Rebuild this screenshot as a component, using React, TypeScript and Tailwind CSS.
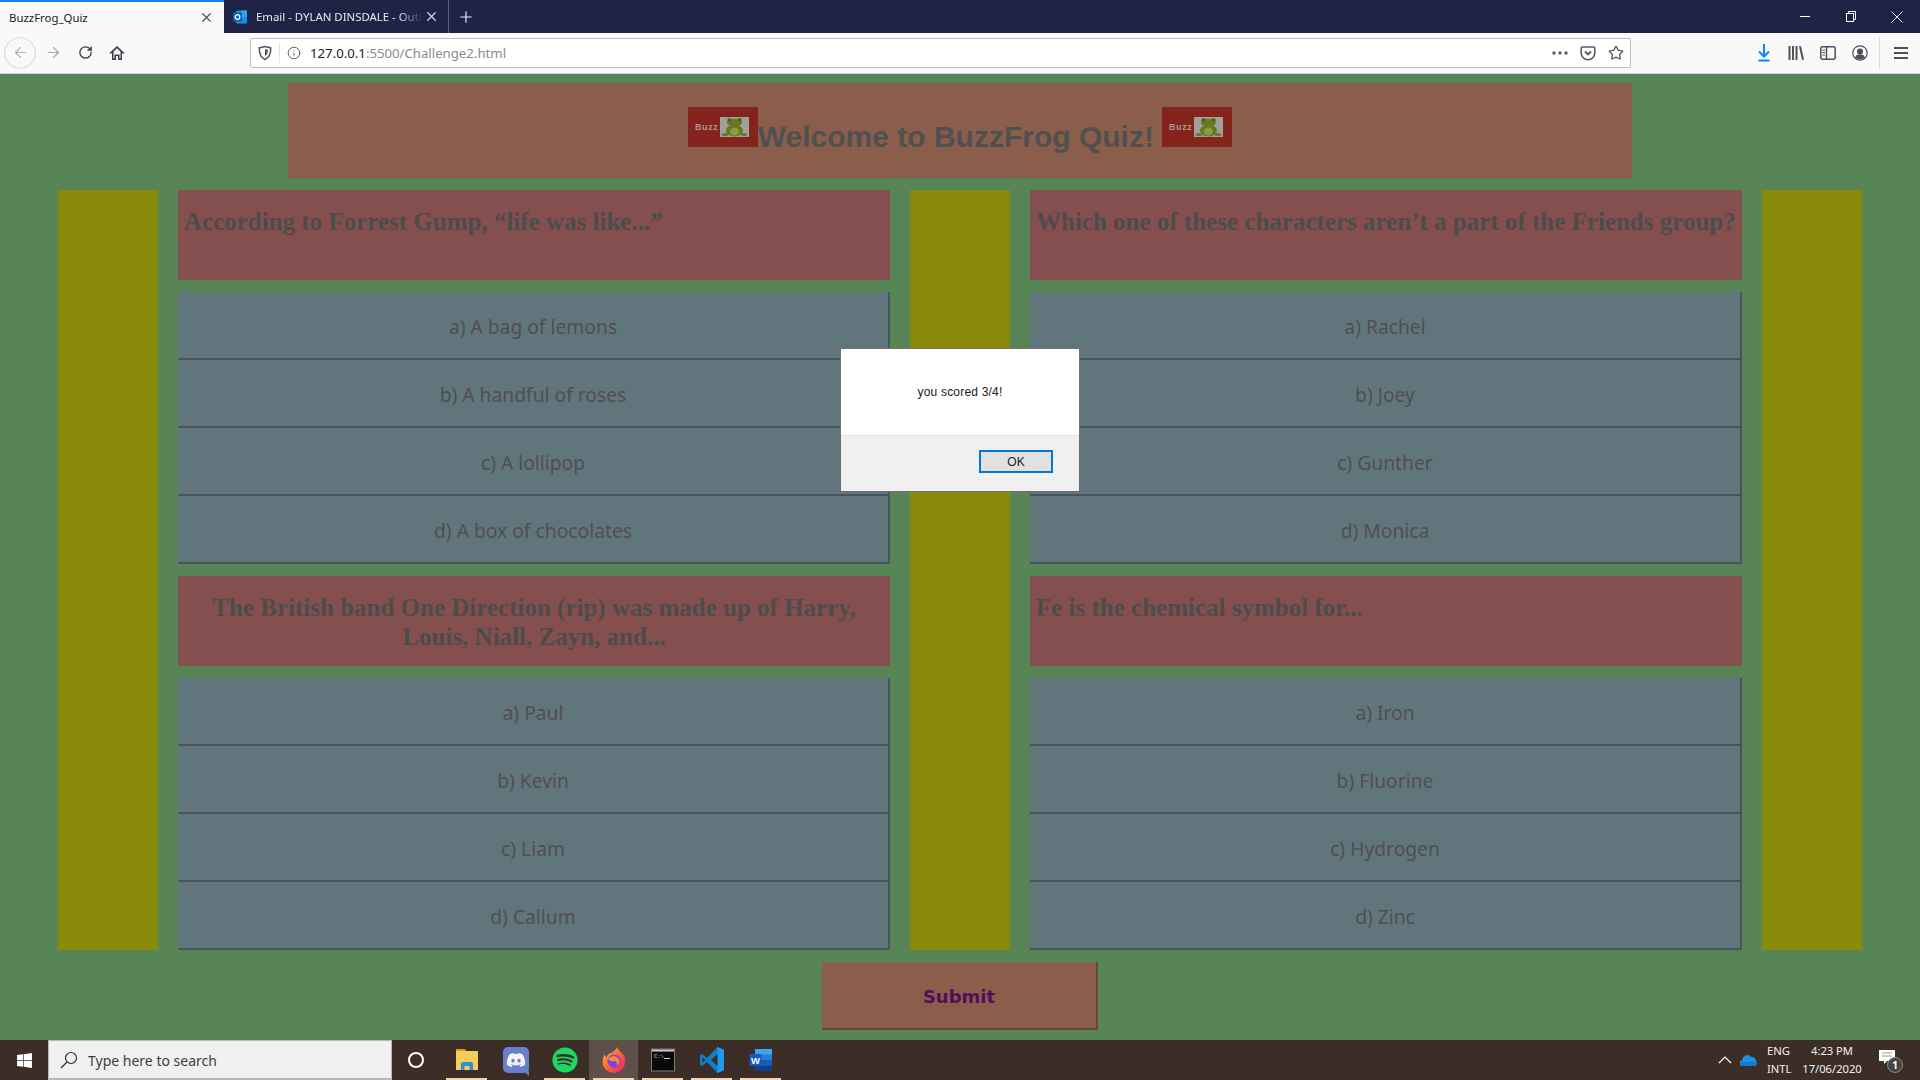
import React from "react";
import { ArrowLeft, ArrowRight, RotateCw, Info, Star, X, Plus } from "lucide-react";
import { FaDiscord, FaSpotify, FaWindows } from "react-icons/fa";

const Logo = () => (
  <svg width="70" height="40" viewBox="0 0 70 40" className="inline align-baseline">
    <rect width="70" height="40" fill="#85241d" />
    <text x="7" y="23" fontFamily="Liberation Sans, sans-serif" fontSize="9" fontWeight="700" letterSpacing="0.6" fill="#ad9591">Buzz</text>
    <rect x="32" y="10" width="29" height="20" fill="#a09f9c" />
    <ellipse cx="46.5" cy="23.5" rx="8.5" ry="6" fill="#67791f" />
    <ellipse cx="46.5" cy="24.5" rx="4.5" ry="4" fill="#8b9a4a" />
    <ellipse cx="46.5" cy="15.5" rx="7.5" ry="3.8" fill="#67791f" />
    <circle cx="41.5" cy="13.2" r="2.3" fill="#67791f" />
    <circle cx="51.5" cy="13.2" r="2.3" fill="#67791f" />
    <circle cx="41.5" cy="13" r="1.1" fill="#3b3b4a" />
    <circle cx="51.5" cy="13" r="1.1" fill="#3b3b4a" />
    <ellipse cx="37" cy="27.5" rx="3.2" ry="1.5" fill="#67791f" />
    <ellipse cx="56" cy="27.5" rx="3.2" ry="1.5" fill="#67791f" />
  </svg>
);

const Answer = ({ text }: { text: string }) => (
  <div className="h-[68px] shrink-0 bg-[#60767c] border-b-2 border-r-2 border-[#47565b] flex items-center justify-center text-[19.25px] text-[#504f4f] font-['Noto_Sans',sans-serif] pt-[4px]">
    {text}
  </div>
);

const Quiz = ({ q, answers, center }: { q: string; answers: string[]; center?: boolean }) => (
  <div className="flex flex-col">
    <div className={`h-[90px] bg-[#854f4f] px-[6px] pt-[17px] text-[25px] leading-[29px] font-bold text-[#4d4c4c] font-['Liberation_Serif',serif] ${center ? "text-center" : "text-left"}`}>
      {q}
    </div>
    <div className="mt-3 flex flex-col">
      {answers.map((a) => (
        <Answer key={a} text={a} />
      ))}
    </div>
  </div>
);

const Side = () => <div className="bg-[#8b8b0b]" />;

const Cell = ({ children }: { children: React.ReactNode }) => (
  <div className="w-8 h-8 flex items-center justify-center shrink-0">{children}</div>
);

const Pocket = () => (
  <svg width="16" height="16" viewBox="0 0 16 16" fill="none" stroke="#5b5b66" strokeWidth="1.6">
    <path d="M2 2h12a.8.8 0 0 1 .8.8V8a6.8 6.8 0 0 1-13.6 0V2.8A.8.8 0 0 1 2 2z" />
    <path d="M5 6.5l3 3 3-3" strokeWidth="1.8" />
  </svg>
);

const ShieldIcon = () => (
  <svg width="16" height="16" viewBox="0 0 16 16" fill="none" stroke="#55555f" strokeWidth="1.6">
    <path d="M8 1.5l5.7 1.4c.2 5.6-1.4 9.6-5.7 11.6-4.3-2-5.9-6-5.7-11.6z" />
    <path d="M8 4l3 .7c0 3-.8 5-3 6.4z" fill="#55555f" stroke="none" />
  </svg>
);

const HomeIcon = () => (
  <svg width="16" height="16" viewBox="0 0 16 16" fill="#3b3b45">
    <path d="M8 1L.5 8l1 1.1L3 7.8V15h4v-4h2v4h4V7.8l1.5 1.3 1-1.1zM11.5 13.5h-1v-4h-5v4h-1V6.5L8 3.2l3.5 3.3z" />
  </svg>
);

const Library = () => (
  <svg width="16" height="16" viewBox="0 0 16 16" fill="#4f4f58">
    <rect x="0.5" y="1" width="2" height="14" />
    <rect x="4" y="1" width="2" height="14" />
    <rect x="7.5" y="1" width="2" height="14" />
    <path d="M11 1.4l1.9-.5 3.1 13.6-1.9.5z" />
  </svg>
);

const Sidebar = () => (
  <svg width="16" height="16" viewBox="0 0 16 16" fill="none" stroke="#4f4f58" strokeWidth="1.5">
    <rect x="0.8" y="1.8" width="14.4" height="12.4" rx="2" />
    <path d="M6.5 2v12" />
    <path d="M2.5 5h2.5M2.5 7.5h2.5M2.5 10h2.5" strokeWidth="1.1" />
  </svg>
);

const Account = () => (
  <svg width="16" height="16" viewBox="0 0 16 16" fill="none" stroke="#4f4f58">
    <circle cx="8" cy="8" r="7.2" strokeWidth="1.2" />
    <circle cx="8" cy="6.4" r="3" fill="#4f4f58" stroke="none" />
    <path d="M3 12.5c1-2.6 3-3.2 5-3.2s4 .6 5 3.2A6.6 6.6 0 0 1 8 14.6a6.6 6.6 0 0 1-5-2.1z" fill="#4f4f58" stroke="none" />
  </svg>
);

const Outlook = () => (
  <svg width="16" height="16" viewBox="0 0 16 16">
    <rect x="4" y="1.5" width="11" height="13" rx="1" fill="#1490df" />
    <rect x="9" y="1.5" width="6" height="6.5" fill="#28a8ea" />
    <rect x="1" y="3.5" width="9" height="9" rx="1" fill="#0f62ab" />
    <circle cx="5.5" cy="8" r="2.3" fill="none" stroke="#fff" strokeWidth="1.3" />
  </svg>
);

const Folder = () => (
  <svg width="24" height="26" viewBox="0 0 24 26">
    <path d="M1 2h9l2 3H1z" fill="#d59c1e" />
    <rect x="1" y="4" width="22" height="19" fill="#f5cd5a" />
    <path d="M6 23v-6a2 2 0 0 1 2-2h8a2 2 0 0 1 2 2v6h-3.5v-4h-5v4z" fill="#2f8fd6" />
  </svg>
);

const Firefox = () => (
  <svg width="24" height="28" viewBox="0 0 24 28">
    <defs>
      <linearGradient id="ff" x1="0" y1="0" x2="1" y2="1">
        <stop offset="0" stopColor="#ffbd2e" />
        <stop offset="0.55" stopColor="#ff5a36" />
        <stop offset="1" stopColor="#e31587" />
      </linearGradient>
    </defs>
    <path d="M15 1c1 3 3 4 5 6 3 3 4 7 3 11-1 5-6 9-11 9S1 23 .7 17C.5 13 1.500 10 3 8c0 2 .5 3 1.500 3.500C5 9 7 7.500 9 7c2-1 5-3 6-6z" fill="url(#ff)" />
    <circle cx="12" cy="15" r="6.500" fill="#7543e3" />
    <path d="M6 13c2-3 7-4 10-1 2 2 2 6-1 8 1-3-1-5-3-5-2 .5-4 0-6-2z" fill="#ff8a2b" />
  </svg>
);

const Terminal = () => (
  <svg width="24" height="24" viewBox="0 0 24 24">
    <rect x="0.500" y="1" width="23" height="22" fill="#0a0a0a" stroke="#7d7d7d" />
    <rect x="1" y="1.500" width="22" height="2" fill="#cfcfcf" />
    <text x="3" y="10" fontSize="5.500" fill="#d8d8d8" fontFamily="Liberation Mono, monospace">C:\</text>
    <rect x="13" y="10" width="6" height="1" fill="#d8d8d8" />
  </svg>
);

const VSCode = () => (
  <svg width="26" height="28" viewBox="0 0 26 28">
    <path d="M18.500 1L8 12 3 8 1 9.500v9L3 20l5-4 10.500 11 6.500-3V4z" fill="#0f7fcc" />
    <path d="M18.500 1L25 4v20l-6.500 3z" fill="#1f9cf0" />
    <path d="M18.500 8l-6.500 6 6.500 6z" fill="#3c2e27" />
    <path d="M3.500 11.500L6.500 14l-3 2.500z" fill="#3c2e27" />
  </svg>
);

const Word = () => (
  <svg width="24" height="24" viewBox="0 0 24 24">
    <rect x="6" y="1" width="17" height="22" rx="1" fill="#2b7cd3" />
    <rect x="6" y="1" width="17" height="5.500" fill="#41a5ee" />
    <rect x="6" y="12" width="17" height="5.500" fill="#185abd" />
    <rect x="6" y="17.500" width="17" height="5.500" fill="#103f91" />
    <rect x="0.500" y="6" width="12" height="12" rx="1" fill="#185abd" />
    <text x="6.500" y="15.500" textAnchor="middle" fontSize="9.500" fontWeight="700" fill="#fff" fontFamily="Liberation Sans, sans-serif">W</text>
  </svg>
);

const Discord = () => (
  <div className="relative w-[26px] h-[26px] rounded-[5px] bg-[#6a7fc9] flex items-center justify-center">
    <FaDiscord size={20} className="text-[#f2f3f8]" />
    <div className="absolute right-0 -bottom-[3px] w-0 h-0 border-t-[5px] border-l-[5px] border-t-[#6a7fc9] border-l-transparent" />
  </div>
);

const TaskIcon = ({ children, on, active }: { children: React.ReactNode; on?: boolean; active?: boolean }) => (
  <div className={`relative w-[49px] h-10 shrink-0 flex items-center justify-center ${active ? "bg-[#5d5048]" : ""}`}>
    {children}
    {on && <div className="absolute bottom-0 left-[4px] right-[4px] h-[2px] bg-[#f5d5b8]" />}
  </div>
);

export default function App() {
  return (
    <div className="relative w-[1920px] h-[1080px] overflow-hidden flex flex-col font-['Noto_Sans',sans-serif]">
      {/* tab strip */}
      <div className="h-[33px] shrink-0 bg-[#1f2447] flex items-stretch text-[11.4px]">
        <div className="w-[224px] bg-[#f9f9fa] border-t-[2px] border-[#0a84ff] flex items-center pl-[9px] pr-[10px] text-[#1c1b22]">
          <span className="flex-1">BuzzFrog_Quiz</span>
          <X size={15} strokeWidth={1.7} className="text-[#4a4a52]" />
        </div>
        <div className="w-[225px] border-r border-[#5a5f7b] flex items-center pl-[8px] pr-[9px] text-[#e8e8ee]">
          <Outlook />
          <span className="ml-[8px] pt-[1px] w-[167px] whitespace-nowrap overflow-hidden [mask-image:linear-gradient(to_right,black_85%,transparent)]">
            Email - DYLAN DINSDALE - Outlook
          </span>
          <X size={15} strokeWidth={1.9} className="ml-auto text-[#d8d8e0]" />
        </div>
        <div className="w-[34px] flex items-center justify-center">
          <Plus size={18} strokeWidth={1.6} className="text-[#e8e8ee]" />
        </div>
        <div className="flex-1" />
        <div className="flex items-center text-white">
          <div className="w-[46px] flex justify-center">
            <svg width="10" height="1" viewBox="0 0 10 1"><rect width="10" height="1" fill="#fff" /></svg>
          </div>
          <div className="w-[46px] flex justify-center">
            <svg width="10" height="11" viewBox="0 0 10 11" fill="none" stroke="#fff" strokeWidth="1">
              <rect x="0.500" y="2.500" width="7" height="8" />
              <path d="M2.500 2.500v-2h7v8h-2" />
            </svg>
          </div>
          <div className="w-[46px] flex justify-center">
            <svg width="12" height="12" viewBox="0 0 12 12" stroke="#fff" strokeWidth="0.9"><path d="M0.500 0.500l11 11M11.500 0.500l-11 11" /></svg>
          </div>
        </div>
      </div>

      {/* toolbar */}
      <div className="h-[41px] shrink-0 bg-[#f9f9fa] border-b border-[#cfcfd2] flex items-center pl-[4px] pb-[1px]">
        <div className="w-8 h-8 rounded-full border border-[#d8d8da] flex items-center justify-center shrink-0">
          <ArrowLeft size={17} strokeWidth={1.7} className="text-[#b4b4b8]" />
        </div>
        <div className="ml-[1px] flex">
          <Cell><ArrowRight size={17} strokeWidth={1.7} className="text-[#a8a8ac]" /></Cell>
          <Cell><RotateCw size={15} strokeWidth={2.2} className="text-[#3f3f47]" /></Cell>
          <Cell><HomeIcon /></Cell>
        </div>
        <div className="ml-[117px] w-[1381px] h-[30px] shrink-0 bg-white border border-[#bdbdc0] rounded-[2px] flex items-center text-[13.2px]">
          <div className="w-[29px] h-[20px] flex items-center justify-center border-r border-[#e3e3e5]"><ShieldIcon /></div>
          <div className="ml-[6px] w-[16px] flex justify-center"><Info size={14} strokeWidth={1.6} className="text-[#55555f]" /></div>
          <span className="ml-[8px] pt-[2px] text-[#8a8a8f]"><span className="text-[#1c1b22]">127.0.0.1</span>:5500/Challenge2.html</span>
          <div className="ml-auto flex items-center pr-[1px]">
            <svg width="16" height="4" viewBox="0 0 16 4" fill="#5b5b66"><circle cx="2" cy="2" r="1.700" /><circle cx="8" cy="2" r="1.700" /><circle cx="14" cy="2" r="1.700" /></svg>
            <div className="ml-[12px]"><Pocket /></div>
            <div className="ml-[12px] mr-[5px]"><Star size={16} strokeWidth={2} className="text-[#5b5b66]" /></div>
          </div>
        </div>
        <div className="ml-[117px] flex">
          <Cell>
            <svg width="16" height="18" viewBox="0 0 16 18" fill="none" stroke="#0a84ff" strokeWidth="2">
              <path d="M8 0v12M3 7.500l5 5 5-5" />
              <path d="M2.500 16.500h11" />
            </svg>
          </Cell>
          <Cell><Library /></Cell>
          <Cell><Sidebar /></Cell>
          <Cell><Account /></Cell>
        </div>
        <div className="ml-[3px] w-px h-[32px] bg-[#dcdcde]" />
        <div className="ml-[5px]">
          <Cell>
            <svg width="14" height="14" viewBox="0 0 14 14" fill="#4f4f58"><rect y="1" width="14" height="2" /><rect y="6" width="14" height="2" /><rect y="11" width="14" height="2" /></svg>
          </Cell>
        </div>
      </div>

      {/* page */}
      <div className="relative h-[966px] shrink-0 bg-[#578556] flex flex-col items-center pt-[9px]">
        <div className="w-[1344px] h-[95px] bg-[#8b5e4c] text-center pt-[24px] text-[30px] leading-[37px] font-bold text-[#505050] font-['Liberation_Sans',sans-serif] whitespace-nowrap">
          <Logo />Welcome to BuzzFrog Quiz! <Logo />
        </div>
        <div className="mt-3 grid grid-cols-[100px_712px_100px_712px_100px] gap-x-5">
          <Side />
          <div className="flex flex-col gap-3">
            <Quiz q="According to Forrest Gump, “life was like...”" answers={["a) A bag of lemons", "b) A handful of roses", "c) A lollipop", "d) A box of chocolates"]} />
            <Quiz center q="The British band One Direction (rip) was made up of Harry, Louis, Niall, Zayn, and..." answers={["a) Paul", "b) Kevin", "c) Liam", "d) Callum"]} />
          </div>
          <Side />
          <div className="flex flex-col gap-3">
            <Quiz q="Which one of these characters aren’t a part of the Friends group?" answers={["a) Rachel", "b) Joey", "c) Gunther", "d) Monica"]} />
            <Quiz q="Fe is the chemical symbol for..." answers={["a) Iron", "b) Fluorine", "c) Hydrogen", "d) Zinc"]} />
          </div>
          <Side />
        </div>
        <div className="mt-3 w-[276px] h-[68px] bg-[#8b5e4c] border-b-2 border-r-2 border-[#684638] flex items-center justify-center pt-[2px] text-[18px] font-bold text-[#560c5a] font-['DejaVu_Sans',sans-serif]">
          Submit
        </div>

        {/* alert dialog */}
        <div className="absolute left-[840px] top-[274px] w-[240px] h-[144px] bg-white border border-[#6f6f6f] flex flex-col font-['Liberation_Sans',sans-serif] text-[12px] text-[#1a1a1a]">
          <div className="h-[86px] flex items-center justify-center tracking-[0.2px]">you scored 3/4!</div>
          <div className="flex-1 bg-[#f0f0f0] border-t border-[#dfdfdf] flex items-start justify-end pr-[26px] pt-[14px]">
            <div className="w-[74px] h-[23px] bg-[#e1e1e1] border-2 border-[#0078d7] flex items-center justify-center">OK</div>
          </div>
        </div>
      </div>

      {/* taskbar */}
      <div className="h-10 shrink-0 bg-[#3c2e27] flex items-center text-white">
        <div className="w-12 flex justify-center"><FaWindows size={17} /></div>
        <div className="w-[344px] h-10 bg-[#f0f0f0] border border-[#b8b8b8] border-b-2 flex items-center pl-[11px] text-[14px] text-[#3d3d3d]">
          <svg width="18" height="18" viewBox="0 0 18 18" fill="none" stroke="#2b2b2b" strokeWidth="1.200">
            <circle cx="11" cy="7" r="5.500" />
            <path d="M7 11l-6 6" />
          </svg>
          <span className="ml-[10px] pt-[1px]">Type here to search</span>
        </div>
        <div className="w-[48px] flex justify-center">
          <div className="w-[16px] h-[16px] rounded-full border-[2.5px] border-white" />
        </div>
        <div className="ml-[2px]" />
        <TaskIcon on><Folder /></TaskIcon>
        <TaskIcon><Discord /></TaskIcon>
        <TaskIcon on><FaSpotify size={26} className="text-[#1ed760]" /></TaskIcon>
        <TaskIcon on active><Firefox /></TaskIcon>
        <TaskIcon on><Terminal /></TaskIcon>
        <TaskIcon on><VSCode /></TaskIcon>
        <TaskIcon on><Word /></TaskIcon>
        <div className="flex-1" />
        <svg width="14" height="8" viewBox="0 0 14 8" fill="none" stroke="#fff" strokeWidth="1.200"><path d="M1 7l6-6 6 6" /></svg>
        <svg width="18" height="12" viewBox="0 0 18 12" className="ml-[8px]">
          <path d="M3 12a3 3 0 0 1-.5-6A5 5 0 0 1 11.500 3 4 4 0 0 1 16 7.500 2.500 2.500 0 0 1 15 12z" fill="#1f8fe5" />
          <path d="M1 8h16v1a3 3 0 0 1-2 3H3a3 3 0 0 1-2-4z" fill="#0f6cbd" opacity="0.6" />
        </svg>
        <div className="ml-[9px] w-[28px] flex flex-col text-[11.2px] leading-[18px] text-[#f2f2f2]">
          <span>ENG</span>
          <span>INTL</span>
        </div>
        <div className="w-[70px] ml-[2px] flex flex-col items-center text-[11.2px] leading-[18px] text-[#f2f2f2]">
          <span>4:23 PM</span>
          <span>17/06/2020</span>
        </div>
        <div className="relative ml-[12px] w-[24px] h-[24px] mr-[17px]">
          <svg width="16" height="14" viewBox="0 0 16 14" className="absolute left-0 top-[2px]">
            <path d="M0 0h16v11H8l-3 3v-3H0z" fill="#fff" />
            <path d="M3 3h10M3 6h10" stroke="#9a9a9a" strokeWidth="1" />
          </svg>
          <div className="absolute left-[8px] top-[9px] w-[16px] h-[16px] rounded-full bg-[#4a4440] border border-[#8a8a8a] flex items-center justify-center text-[10px] leading-none font-bold">1</div>
        </div>
      </div>
    </div>
  );
}
